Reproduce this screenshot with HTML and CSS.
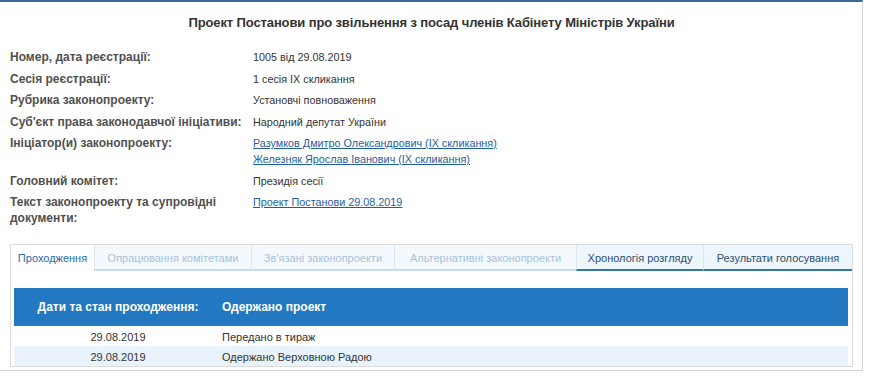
FILE: index.html
```html
<!DOCTYPE html>
<html lang="uk">
<head>
    <meta charset="UTF-8">
    <title>Картка законопроекту</title>
    <link rel="stylesheet" href="styles.css">
</head>
<body>
    <div class="card">
        <h3 class="title">Проект Постанови про звільнення з посад членів Кабінету Міністрів України</h3>

        <div class="info">
            <div class="row"><div class="label">Номер, дата реєстрації:</div><div class="value">1005 від 29.08.2019</div></div>
            <div class="row"><div class="label">Сесія реєстрації:</div><div class="value">1 сесія IX скликання</div></div>
            <div class="row"><div class="label">Рубрика законопроекту:</div><div class="value">Установчі повноваження</div></div>
            <div class="row"><div class="label">Суб'єкт права законодавчої ініціативи:</div><div class="value">Народний депутат України</div></div>
            <div class="row">
                <div class="label">Ініціатор(и) законопроекту:</div>
                <div class="value">
                    <a href="#">Разумков Дмитро Олександрович (IX скликання)</a><br>
                    <a href="#">Железняк Ярослав Іванович (IX скликання)</a>
                </div>
            </div>
            <div class="row"><div class="label">Головний комітет:</div><div class="value">Президія сесії</div></div>
            <div class="row"><div class="label">Текст законопроекту та супровідні документи:</div><div class="value"><a href="#">Проект Постанови 29.08.2019</a></div></div>
        </div>

        <div class="tabs">
            <div class="tab-bar">
                <div class="tab active">Проходження</div>
                <div class="tab disabled">Опрацювання комітетами</div>
                <div class="tab disabled">Зв'язані законопроекти</div>
                <div class="tab disabled">Альтернативні законопроекти</div>
                <div class="tab">Хронологія розгляду</div>
                <div class="tab">Результати голосування</div>
            </div>
            <div class="tab-body">
                <div class="stage-head">
                    <div class="col-date">Дати та стан проходження:</div>
                    <div class="col-text">Одержано проект</div>
                </div>
                <div class="stage">
                    <div class="col-date">29.08.2019</div>
                    <div class="col-text">Передано в тираж</div>
                </div>
                <div class="stage odd">
                    <div class="col-date">29.08.2019</div>
                    <div class="col-text">Одержано Верховною Радою</div>
                </div>
            </div>
        </div>
    </div>
</body>
</html>
```

FILE: styles.css
```css
* { margin: 0; padding: 0; box-sizing: border-box; }
body { background: #fff; color: #333; font-family: 'Liberation Sans', Arial, sans-serif; font-size: 11px; }
a { color: #1f5e9e; text-decoration: underline; }

.card { width: 863px; height: 371px; border-top: 2px solid #3a6a95; border-right: 1px solid #d6d6d6; border-bottom: 1px solid #d6d6d6; padding: 0 9px 0 10px; overflow: hidden; }
.title { font-size: 13px; letter-spacing: -0.12px; font-weight: bold; color: #333; text-align: center; padding: 13px 0 0; line-height: 16px; height: 44px; }

.info { display: flex; flex-direction: column; }
.row { display: flex; padding: 3px 0 2.5px; line-height: 16px; }
.label { width: 243px; font-size: 12px; font-weight: bold; color: #505050; padding-right: 8px; }
.value { flex: 1; font-size: 10.8px; color: #333; }

.tabs { margin-top: 15px; border: 1px solid #dcdcdc; height: 123px; }
.tab-bar { display: flex; white-space: nowrap; }
.tab { height: 26px; line-height: 26px; padding: 0 6px; background: #eef6fd; color: #2f4f6f; border-left: 1px solid #dde6ee; border-bottom: 2px solid #3578b0; text-align: center; }
.tab:nth-child(2) { width: 157px; }
.tab:nth-child(3) { width: 143px; }
.tab:nth-child(4) { width: 182px; }
.tab:nth-child(5) { width: 127px; }
.tab:nth-child(6) { flex: 1; }
.tab.active { width: 83px; background: #fff; color: #2a6aa7; border-left: none; border-bottom: none; }
.tab.disabled { background: #f4f9fd; color: #a9c2d9; border-bottom-color: #c7dcee; }

.tab-body { padding: 17px 4px 0 3px; }
.stage-head { display: flex; background: #2379c1; color: #fff; font-weight: bold; font-size: 12px; height: 38px; align-items: center; }
.stage { display: flex; height: 20px; padding-top: 3px; align-items: center; color: #333; }
.stage.odd { background: #e8f3fd; }
.col-date { width: 208px; text-align: center; }
.col-text { flex: 1; }
```
